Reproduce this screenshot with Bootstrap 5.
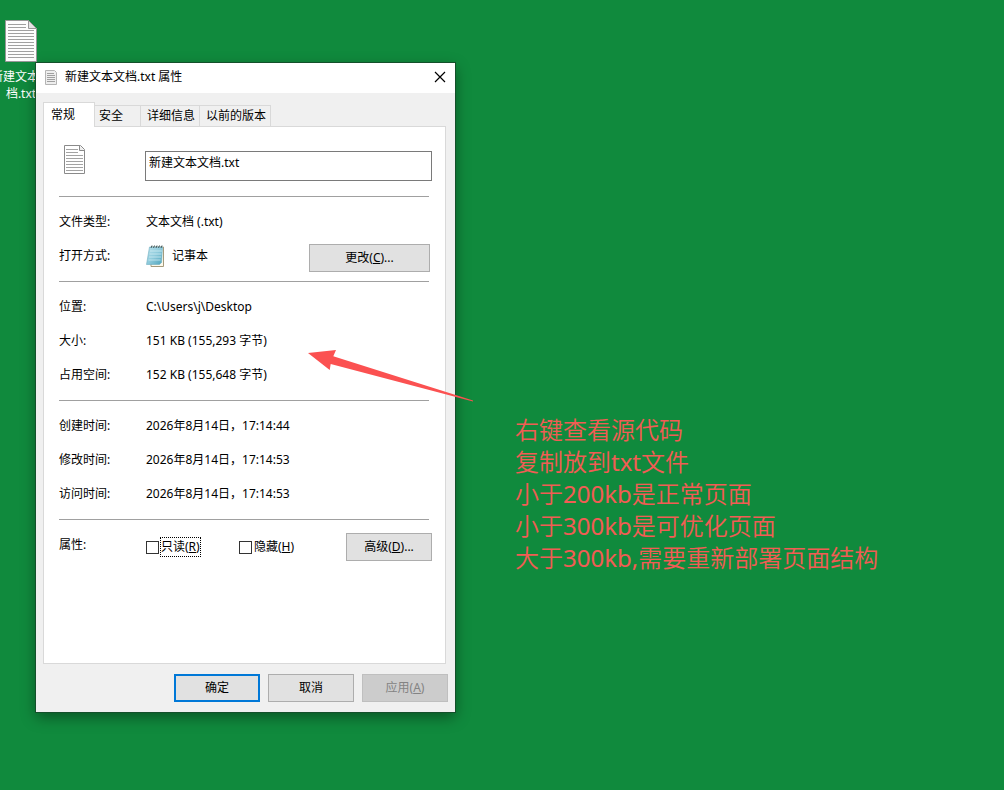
<!DOCTYPE html>
<html lang="zh-CN">
<head>
<meta charset="utf-8">
<meta name="viewport" content="width=device-width, initial-scale=1">
<title>新建文本文档.txt 属性</title>
<link href="https://cdn.jsdelivr.net/npm/bootstrap@5.3.0/dist/css/bootstrap.min.css" rel="stylesheet">
<script src="https://cdn.jsdelivr.net/npm/bootstrap@5.3.0/dist/js/bootstrap.bundle.min.js" defer></script>
<style>
  body { font: 12px/18px "Noto Sans", "Noto Sans CJK SC", sans-serif; color: #000; background: #108a3d; }
  /* desktop surface and the things placed on it */
  .desktop { min-height: 100vh; }
  .desk-file { position: absolute; left: -9px; top: 20px; width: 60px; line-height: 17px; }
  .props-window { position: absolute; left: 36px; top: 63px; width: 419px; background: #f0f0f0; box-shadow: 0 0 0 1px #14502b, 0 5px 14px rgba(0,0,0,.4); }
  .pointer { position: absolute; left: 307px; top: 349px; pointer-events: none; }
  .notes { position: absolute; left: 515px; top: 414px; font-size: 24px; line-height: 32px; color: #f25c54; font-weight: 350; }
  .notes span { font-weight: 400; }
  .title-bar { height: 30px; padding: 0 9px 2px; background: #fff; }
  .close-x { border: 0; padding: 0; background: none; line-height: 0; }
  .tabs { padding: 9px 7px 0; }
  .tabs .nav-link { height: 22px; padding: 0 4px 0 6px; margin: 0 0 -1px -1px; border: 1px solid #d9d9d9; border-radius: 0; background: #f0f0f0; color: #000; text-align: left; line-height: 20px; }
  .tabs .nav-link.active { height: 25px; width: 52px; padding: 0 7px; margin-left: 0; background: #fff; border-bottom: 0; z-index: 1; position: relative; }
  .tabs .tab-short { width: 47px; padding: 0 4px; }
  .sheet { margin: 0 9px 0 7px; padding: 18px 13px 0 15px; border: 1px solid #d9d9d9; background: #fff; }
  .file-head { padding-bottom: 15px; }
  .file-icon { width: 86px; padding-left: 5px; }
  .name-box { height: 30px; margin-top: 6px; padding: 0 3px 8px; border: 1px solid #7a7a7a; border-radius: 0; font-size: 12px; line-height: 18px; color: #000; }
  .group { margin: 0; padding: 8px 0; }
  .rule { margin: 0 3px 0 0; border-color: #a0a0a0; opacity: 1; }
  .prop { min-height: 34px; }
  .prop dt { width: 87px; font-weight: 400; }
  .prop dd { margin: 0; }
  .low { padding-top: 4px; }
  .win-btn { width: 86px; height: 28px; padding: 0; border: 1px solid #adadad; border-radius: 0; background: #e1e1e1; color: #000; font-size: 12px; line-height: 18px; }
  .win-btn.wide { width: 121px; margin-right: 2px; }
  .win-btn.default { border: 2px solid #0078d7; }
  .win-btn:disabled { background: #ccc; border-color: #bfbfbf; color: #838383; opacity: 1; }
  .tick { height: 28px; width: 93px; gap: 1px; }
  .tick input { appearance: none; width: 13px; height: 13px; margin: 0; border: 1px solid #333; background: #fff; }
  .tick label { border: 1px dotted transparent; }
  .tick label.focused { border-color: #000; }
  .blank { min-height: 93px; }
  .actions { padding: 10px 7px 10px; }
</style>
</head>
<body>
<svg width="0" height="0" class="position-absolute" aria-hidden="true">
  <symbol id="page" viewBox="0 0 22 29">
    <path d="M.5.5h16l4 4v24H.5z" fill="#fff" stroke="#8a8a8a"/>
    <path d="M15.500.5v5h5" fill="#eee" stroke="#8a8a8a"/>
    <path d="M2 4.500h12M2 7.500h12M2 10.500h17M2 13.500h17M2 16.500h17M2 19.500h17M2 22.500h17M2 25.500h17" stroke="#a3a3a3"/>
  </symbol>
</svg>
<main class="desktop position-relative overflow-hidden">
  <div class="desk-file text-center text-white">
    <svg class="d-block mx-auto mb-1" width="34" height="44" viewBox="0 0 34 44" aria-hidden="true">
      <path d="M1.500.5h23l8 8v33h-31z" fill="#fdfdfd" stroke="#989898"/>
      <path d="M24.500.5v8h8z" fill="#e4e4e4" stroke="#989898"/>
      <path d="M4 4.500h18M4 7.500h18M4 10.500h26M4 13.500h26M4 16.500h26M4 19.500h26M4 22.500h26M4 25.500h26M4 28.500h26M4 31.500h26M4 34.500h26M4 37.500h26" stroke="#a0a0a0"/>
    </svg>
    新建文本文<br>档.txt
  </div>

  <section class="props-window" aria-label="新建文本文档.txt 属性">
    <header class="title-bar d-flex align-items-center">
      <svg width="12" height="16" viewBox="0 0 12 16" aria-hidden="true"><path d="M.5 1.500h9l2 2v12H.5z" fill="#eee" stroke="#b4b4b4"/><path d="M2 4.500h7M2 6.500h8M2 8.500h8M2 10.500h8M2 12.500h8" stroke="#a0a0a0"/></svg>
      <span class="ms-2 flex-grow-1 text-nowrap">新建文本文档.txt 属性</span>
      <button type="button" class="close-x" aria-label="关闭"><svg width="12" height="12" viewBox="0 0 12 12"><path d="M1 1l10 10M11 1L1 11" stroke="#000" stroke-width="1.200"/></svg></button>
    </header>
    <nav class="tabs nav d-flex flex-nowrap align-items-end" role="tablist">
      <button type="button" class="nav-link active" role="tab" aria-selected="true">常规</button>
      <button type="button" class="nav-link tab-short" role="tab">安全</button>
      <button type="button" class="nav-link" role="tab">详细信息</button>
      <button type="button" class="nav-link" role="tab">以前的版本</button>
    </nav>
    <div class="sheet">
      <div class="file-head d-flex align-items-start">
        <div class="file-icon flex-shrink-0"><svg class="d-block" width="22" height="29" aria-hidden="true"><use href="#page"/></svg></div>
        <input class="name-box form-control" type="text" value="新建文本文档.txt" aria-label="文件名">
      </div>
      <hr class="rule">
      <dl class="group">
        <div class="prop d-flex align-items-center"><dt>文件类型:</dt><dd>文本文档 (.txt)</dd></div>
        <div class="prop d-flex align-items-center"><dt>打开方式:</dt>
          <dd class="d-flex align-items-center flex-grow-1">
            <svg width="18" height="24" viewBox="0 0 18 24" aria-hidden="true">
              <defs><linearGradient id="pad" x1="0" y1="0" x2="1" y2="1"><stop offset="0" stop-color="#b9e2ec"/><stop offset=".5" stop-color="#8fcbdc"/><stop offset="1" stop-color="#4da3bc"/></linearGradient></defs>
              <path d="M5 3h12.500v19.500H5z" fill="#fbf8ea" stroke="#a59a7d"/>
              <path d="M3.500 3h13l-1 15.500-2 2H.5z" fill="url(#pad)" stroke="#6eafc1" stroke-width=".6"/>
              <path d="M4 7h12M3.500 10h12M3 13h12M2.500 16h12" stroke="#d6eff5" stroke-width=".7"/>
              <path d="M5 4l1-2.500M7.500 4l1-2.500M10 4l1-2.500M12.500 4l1-2.500M15 4l1-2.500" stroke="#455a60"/>
            </svg>
            <span class="ms-1 ps-1 flex-grow-1">记事本</span>
          </dd>
          <div class="low"><button type="button" class="btn win-btn wide">更改(<u>C</u>)...</button></div>
        </div>
      </dl>
      <hr class="rule">
      <dl class="group">
        <div class="prop d-flex align-items-center"><dt>位置:</dt><dd>C:\Users\j\Desktop</dd></div>
        <div class="prop d-flex align-items-center"><dt>大小:</dt><dd>151 KB (155,293 字节)</dd></div>
        <div class="prop d-flex align-items-center"><dt>占用空间:</dt><dd>152 KB (155,648 字节)</dd></div>
      </dl>
      <hr class="rule">
      <dl class="group">
        <div class="prop d-flex align-items-center"><dt>创建时间:</dt><dd>2026年8月14日，17:14:44</dd></div>
        <div class="prop d-flex align-items-center"><dt>修改时间:</dt><dd>2026年8月14日，17:14:53</dd></div>
        <div class="prop d-flex align-items-center"><dt>访问时间:</dt><dd>2026年8月14日，17:14:53</dd></div>
      </dl>
      <hr class="rule">
      <dl class="group">
        <div class="prop d-flex align-items-center"><dt>属性:</dt>
          <dd class="low d-flex flex-grow-1">
            <div class="tick d-flex align-items-center"><input type="checkbox" id="ro"><label for="ro" class="focused">只读(<u>R</u>)</label></div>
            <div class="tick d-flex align-items-center"><input type="checkbox" id="hid"><label for="hid">隐藏(<u>H</u>)</label></div>
            <button type="button" class="btn win-btn ms-auto">高级(<u>D</u>)...</button>
          </dd>
        </div>
      </dl>
      <div class="blank"></div>
    </div>
    <footer class="actions d-flex justify-content-end gap-2">
      <button type="button" class="btn win-btn default">确定</button>
      <button type="button" class="btn win-btn">取消</button>
      <button type="button" class="btn win-btn" disabled>应用(<u>A</u>)</button>
    </footer>
  </section>

  <svg class="pointer" width="168" height="54" viewBox="307 349 168 54" aria-hidden="true"><path d="M308 353L336 350L333.300 356.300L473 400.500V401.500L330.700 364L329.700 370z" fill="#fb5151"/></svg>

  <div class="notes text-nowrap">
    <div>右键查看源代码</div>
    <div>复制放到<span>txt</span>文件</div>
    <div>小于<span>200kb</span>是正常页面</div>
    <div>小于<span>300kb</span>是可优化页面</div>
    <div>大于<span>300kb,</span>需要重新部署页面结构</div>
  </div>
</main>
</body>
</html>
